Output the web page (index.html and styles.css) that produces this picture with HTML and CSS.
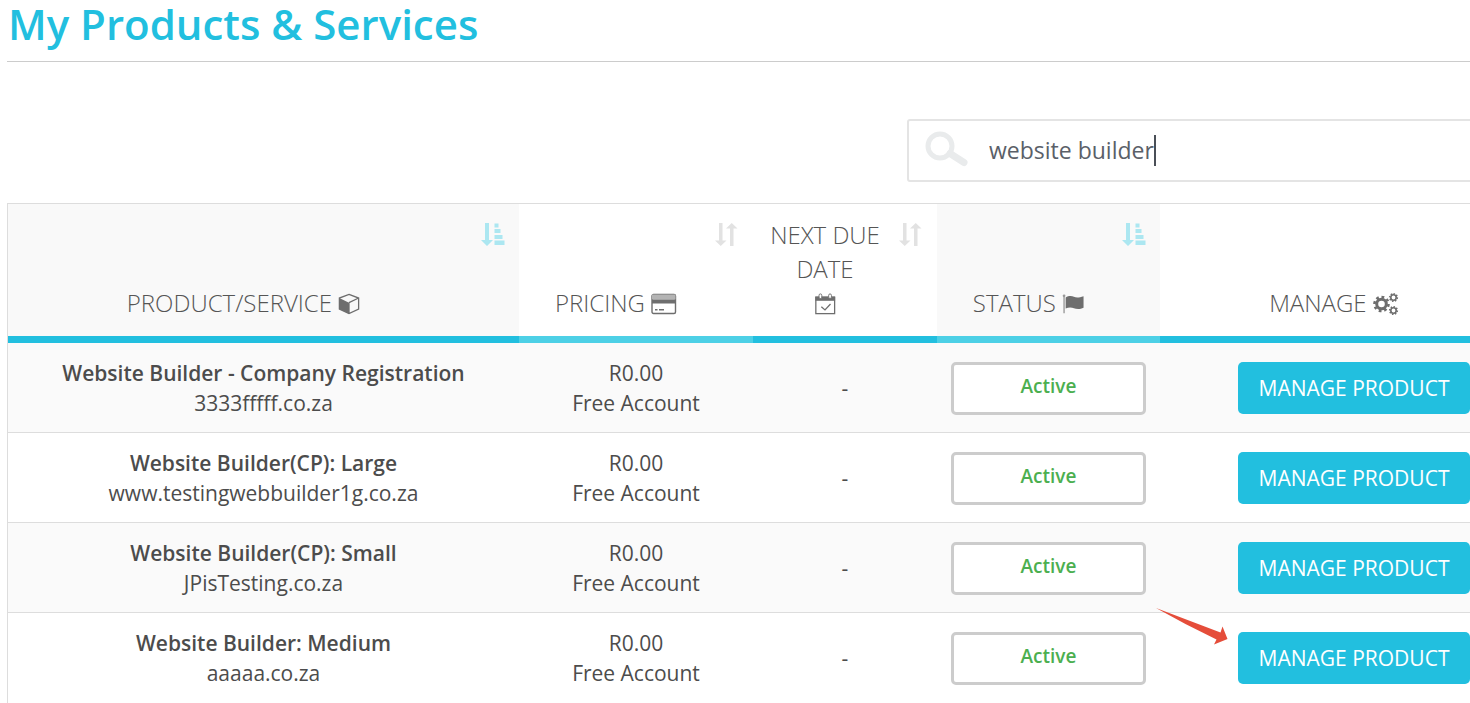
FILE: index.html
```html
<!DOCTYPE html>
<html lang="en">
<head>
  <meta charset="UTF-8">
  <meta name="viewport" content="width=device-width, initial-scale=1.0">
  <title>My Products &amp; Services</title>
  <link rel="stylesheet" href="styles.css">
</head>
<body>
  <svg class="sprite" aria-hidden="true">
    <symbol id="icon-sorted" viewBox="0 0 24 24">
      <path d="M4 0h4v17h4l-6 6l-6-6h4z"/>
      <path d="M13.500 0.500h4v4h-4zM13.500 6h6v4h-6zM13.500 12h8v4h-8zM13.500 17.500h10v4.500h-10z"/>
    </symbol>
    <symbol id="icon-sort" viewBox="0 0 24 24">
      <path d="M4 0h3.500v17.500h4l-5.750 5.500l-5.750-5.500h4zM15 23v-17.500h-4l5.750-5.500l5.750 5.500h-4v17.500z"/>
    </symbol>
    <symbol id="icon-flag" viewBox="0 0 24 22">
      <path class="pole" d="M1.500 2h1.500v19h-1.500z"/>
      <circle class="pole" cx="2.250" cy="2" r="1.500"/>
      <path d="M4 4c3-2 6.500-2 9-.8s6 1 10.500-.7v12.500c-4 2-8 1.500-10.500.5s-6-1.300-9 .5z"/>
    </symbol>
    <symbol id="button-arrow" viewBox="0 0 72 38">
      <path d="M0 0L64.500 24.500L66.500 18.500L71.500 31L58 36.500L60.500 31.500Q30 17 0 0z"/>
    </symbol>
  </svg>

  <main class="page">
    <h1 class="page-title">My Products &amp; Services</h1>

    <div class="products">
      <form class="search">
        <svg class="search-icon" viewBox="0 0 44 38" aria-hidden="true">
          <circle cx="15" cy="15" r="12"/>
          <path d="M25 22.500L39 31.500"/>
        </svg>
        <input class="search-input" type="text" value="website builder" aria-label="Search products">
        <span class="search-caret"></span>
      </form>

      <table class="products-table">
        <colgroup>
          <col class="col-product">
          <col class="col-pricing">
          <col class="col-due">
          <col class="col-status">
          <col>
        </colgroup>
        <thead>
          <tr>
            <th class="sorted">
              PRODUCT/SERVICE
              <svg class="icon" viewBox="0 0 24 24" aria-hidden="true">
                <path class="line" d="M12 1.500L22.500 5.500V17.500L12 22.500L1.500 17.500V5.500zM12 10.500L22.500 5.500M12 10.500V22.500"/>
                <path d="M1.500 5.500L12 10.500V22.500L1.500 17.500z"/>
              </svg>
              <button class="sort" type="button" aria-label="Sort by product"><svg><use href="#icon-sorted"/></svg></button>
            </th>
            <th class="light-line">
              PRICING
              <svg class="icon icon-wide" viewBox="0 0 26 22" aria-hidden="true">
                <rect class="line" x="1" y="1.500" width="23.500" height="19" rx="1.500"/>
                <path class="faded" d="M1 1.500h23.500v5h-23.500z"/>
                <path d="M1 6.500h23.500v4h-23.500zM4 16h2.500v1.500h-2.500zM8 16h5v1.500h-5z"/>
              </svg>
              <button class="sort" type="button" aria-label="Sort by pricing"><svg><use href="#icon-sort"/></svg></button>
            </th>
            <th>
              NEXT DUE<br>DATE<br>
              <svg class="icon" viewBox="0 0 24 24" aria-hidden="true">
                <rect class="line" x="2" y="4.500" width="20.500" height="18"/>
                <path d="M1.500 4h21.500v4.500h-21.500z"/>
                <rect class="ring" x="5.500" y="1" width="3" height="5" rx="1.500"/>
                <rect class="ring" x="16" y="1" width="3" height="5" rx="1.500"/>
                <path class="line" d="M8 15l4 3.500l6-6.500"/>
              </svg>
              <button class="sort" type="button" aria-label="Sort by next due date"><svg><use href="#icon-sort"/></svg></button>
            </th>
            <th class="sorted light-line">
              STATUS
              <svg class="icon" viewBox="0 0 24 22" aria-hidden="true"><use href="#icon-flag"/></svg>
              <button class="sort" type="button" aria-label="Sort by status"><svg><use href="#icon-sorted"/></svg></button>
            </th>
            <th>
              MANAGE
              <svg class="icon icon-wide" viewBox="0 0 26 22" aria-hidden="true">
                <circle class="gear" cx="8.500" cy="11" r="4.800"/>
                <circle class="teeth" cx="8.500" cy="11" r="7" pathLength="80"/>
                <circle class="gear small" cx="20.500" cy="4.500" r="2.700"/>
                <circle class="teeth small" cx="20.500" cy="4.500" r="3.800" pathLength="80"/>
                <circle class="gear small" cx="20.500" cy="17.500" r="2.700"/>
                <circle class="teeth small" cx="20.500" cy="17.500" r="3.800" pathLength="80"/>
              </svg>
            </th>
          </tr>
        </thead>
        <tbody>
          <tr>
            <td><strong>Website Builder - Company Registration</strong><br>3333fffff.co.za</td>
            <td>R0.00<br>Free Account</td>
            <td>-</td>
            <td><span class="status">Active</span></td>
            <td><button class="manage" type="button">MANAGE PRODUCT</button></td>
          </tr>
          <tr>
            <td><strong>Website Builder(CP): Large</strong><br>www.testingwebbuilder1g.co.za</td>
            <td>R0.00<br>Free Account</td>
            <td>-</td>
            <td><span class="status">Active</span></td>
            <td><button class="manage" type="button">MANAGE PRODUCT</button></td>
          </tr>
          <tr>
            <td><strong>Website Builder(CP): Small</strong><br>JPisTesting.co.za</td>
            <td>R0.00<br>Free Account</td>
            <td>-</td>
            <td><span class="status">Active</span></td>
            <td><button class="manage" type="button">MANAGE PRODUCT</button></td>
          </tr>
          <tr>
            <td><strong>Website Builder: Medium</strong><br>aaaaa.co.za</td>
            <td>R0.00<br>Free Account</td>
            <td>-</td>
            <td><span class="status">Active</span></td>
            <td class="highlighted">
              <svg class="pointer" aria-hidden="true"><use href="#button-arrow"/></svg>
              <button class="manage" type="button">MANAGE PRODUCT</button>
            </td>
          </tr>
        </tbody>
      </table>
    </div>
  </main>
</body>
</html>
```

FILE: styles.css
```css
* {
  margin: 0;
  padding: 0;
  box-sizing: border-box;
}

body {
  font-family: "Open Sans", "Noto Sans", sans-serif;
  font-size: 21px;
  line-height: 30px;
  color: #4c4c4c;
  background: #fff;
}

.sprite {
  display: none;
}

.page {
  padding-left: 7px;
  overflow-x: clip;
}

.page-title {
  height: 62px;
  padding-left: 1px;
  border-bottom: 1px solid #ccc;
  font-size: 42px;
  line-height: 48px;
  font-weight: 600;
  color: #22bfdf;
}

/* the list is wider than the page and runs off its right edge */
.products {
  margin-right: -79px;
  padding-top: 57px;
}

.search {
  position: relative;
  display: flex;
  align-items: center;
  width: 642px;
  height: 63px;
  margin-left: auto;
  margin-bottom: 21px;
  padding-left: 16px;
  padding-bottom: 2px;
  border: 2px solid #e4e4e4;
  border-radius: 3px;
}

.search-icon {
  width: 44px;
  height: 38px;
  fill: none;
  stroke: #e9ebec;
  stroke-width: 5;
  stroke-linecap: round;
}

.search-icon path {
  stroke-width: 7;
}

.search-input {
  flex: 1;
  margin-left: 20px;
  border: none;
  outline: none;
  background: none;
  font: inherit;
  font-size: 23px;
  color: #5a6068;
}

.search-caret {
  position: absolute;
  left: 245px;
  top: 14px;
  width: 2px;
  height: 31px;
  background: #4a4f57;
}

.products-table {
  width: 100%;
  table-layout: fixed;
  border-collapse: separate;
  border-spacing: 0;
  border: 1px solid #ddd;
  border-bottom: none;
  text-align: center;
}

.col-product {
  width: 511px;
}

.col-pricing {
  width: 234px;
}

.col-due {
  width: 184px;
}

.col-status {
  width: 223px;
}

th {
  position: relative;
  padding: 14px 54px 16px 14px;
  border-bottom: 7px solid #22bfdf;
  font-size: 24px;
  line-height: 34px;
  font-weight: 300;
  color: #555;
  vertical-align: bottom;
}

th.sorted {
  background: #f9f9f9;
}

th.light-line {
  border-bottom-color: #4dd0e6;
}

.icon {
  width: 22px;
  height: 22px;
  vertical-align: -3px;
  fill: #6e6e6e;
}

.icon-wide {
  width: 26px;
}

.icon .line {
  fill: none;
  stroke: #6e6e6e;
  stroke-width: 1.4;
}

.icon .faded {
  fill: #b4b4b4;
}

.icon .ring {
  fill: #fff;
  stroke: #6e6e6e;
}

.pole {
  fill: #999;
}

.icon .gear {
  fill: none;
  stroke: #6e6e6e;
  stroke-width: 3;
}

.icon .teeth {
  fill: none;
  stroke: #6e6e6e;
  stroke-width: 2.6;
  stroke-dasharray: 5 5;
}

.icon .small {
  stroke-width: 1.6;
}

.sort {
  position: absolute;
  top: 19px;
  right: 14px;
  width: 24px;
  height: 24px;
  border: none;
  background: none;
  cursor: pointer;
}

.sort svg {
  display: block;
  width: 24px;
  height: 24px;
  fill: #e2e2e2;
}

.sorted .sort svg {
  fill: #ace7f1;
}

td {
  padding: 15px 14px 14px;
  border-bottom: 1px solid #ddd;
  vertical-align: middle;
}

tbody tr:nth-child(odd) {
  background: #fafafa;
}

tbody tr:last-child td {
  border-bottom-color: transparent;
}

td strong {
  font-weight: 600;
}

.status {
  display: block;
  height: 53px;
  padding-bottom: 3px;
  border: 3px solid #ccc;
  border-radius: 5px;
  background: #fff;
  font-size: 19px;
  line-height: 43px;
  font-weight: 600;
  color: #4caf50;
}

.manage {
  height: 52px;
  padding: 0 21px;
  border: none;
  border-radius: 5px;
  background: #22bfdf;
  font: inherit;
  color: #fff;
  vertical-align: middle;
  cursor: pointer;
}

.highlighted {
  position: relative;
}

.pointer {
  position: absolute;
  top: -5px;
  left: -4px;
  width: 72px;
  height: 38px;
  fill: #e54d3a;
}
```
